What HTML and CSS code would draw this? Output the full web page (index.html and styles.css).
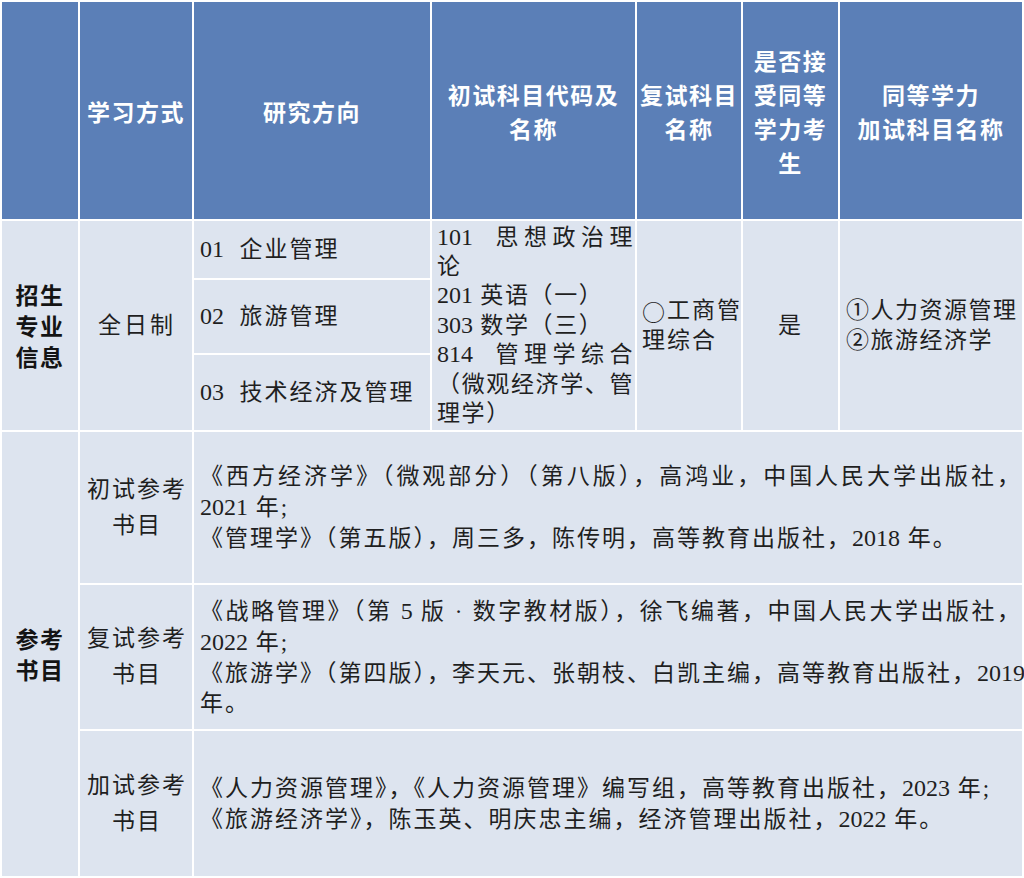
FILE: index.html
```html
<!DOCTYPE html>
<html lang="zh-CN">
<head>
<meta charset="utf-8">
<title>招生专业信息</title>
<link rel="stylesheet" href="styles.css">
</head>
<body>
<table class="grid">
  <colgroup>
    <col class="c1"><col class="c2"><col class="c3"><col class="c4"><col class="c5"><col class="c6"><col class="c7">
  </colgroup>
  <tr class="r-head">
    <th></th>
    <th>学习方式</th>
    <th>研究方向</th>
    <th>初试科目代码及<br>名称</th>
    <th>复试科目<br>名称</th>
    <th>是否接<br>受同等<br>学力考<br>生</th>
    <th>同等学力<br>加试科目名称</th>
  </tr>
  <tr class="r-a">
    <td rowspan="3" class="cat">招生<br>专业<br>信息</td>
    <td rowspan="3" class="mode">全日制</td>
    <td class="dir"><span class="num">01</span>&nbsp;&nbsp;企业管理</td>
    <td rowspan="3" class="subj">
      <span class="ln jl"><span class="num">101</span>&nbsp;&nbsp;思想政治理</span>
      <span class="ln">论</span>
      <span class="ln"><span class="num">201</span>&nbsp;英语（一）</span>
      <span class="ln"><span class="num">303</span>&nbsp;数学（三）</span>
      <span class="ln jl"><span class="num">814</span>&nbsp;&nbsp;管理学综合</span>
      <span class="ln jl">（微观经济学、管</span>
      <span class="ln">理学）</span>
    </td>
    <td rowspan="3" class="retest">
      <span class="ln jl"><span class="circ">○</span>工商管</span>
      <span class="ln">理综合</span>
    </td>
    <td rowspan="3" class="accept">是</td>
    <td rowspan="3" class="extra">
      <span class="ln">①人力资源管理</span>
      <span class="ln">②旅游经济学</span>
    </td>
  </tr>
  <tr class="r-b">
    <td class="dir"><span class="num">02</span>&nbsp;&nbsp;旅游管理</td>
  </tr>
  <tr class="r-c">
    <td class="dir"><span class="num">03</span>&nbsp;&nbsp;技术经济及管理</td>
  </tr>
  <tr class="r-d">
    <td rowspan="3" class="cat">参考<br>书目</td>
    <td class="kind">初试参考<br>书目</td>
    <td colspan="5" class="books">
      <span class="ln jl">《西方经济学》（微观部分）（第八版），高鸿业，中国人民大学出版社，</span>
      <span class="ln"><span class="num">2021</span> 年;</span>
      <span class="ln">《管理学》（第五版），周三多，陈传明，高等教育出版社，<span class="num">2018</span> 年。</span>
    </td>
  </tr>
  <tr class="r-e">
    <td class="kind">复试参考<br>书目</td>
    <td colspan="5" class="books">
      <span class="ln jl">《战略管理》（第 <span class="num">5</span> 版 · 数字教材版），徐飞编著，中国人民大学出版社，</span>
      <span class="ln"><span class="num">2022</span> 年;</span>
      <span class="ln jl">《旅游学》（第四版），李天元、张朝枝、白凯主编，高等教育出版社，<span class="num">2019</span></span>
      <span class="ln">年。</span>
    </td>
  </tr>
  <tr class="r-f">
    <td class="kind">加试参考<br>书目</td>
    <td colspan="5" class="books">
      <span class="ln">《人力资源管理》，《人力资源管理》编写组，高等教育出版社，<span class="num">2023</span> 年;</span>
      <span class="ln">《旅游经济学》，陈玉英、明庆忠主编，经济管理出版社，<span class="num">2022</span> 年。</span>
    </td>
  </tr>
</table>
</body>
</html>
```
FILE: styles.css
```css
html, body {
  margin: 0;
  padding: 0;
  background: #ffffff;
  overflow: hidden;
}

.grid {
  border-collapse: separate;
  border-spacing: 2px;
  background: #ffffff;
  width: 1024px;
  table-layout: fixed;
}

.c1 { width: 76px; }
.c2 { width: 112px; }
.c3 { width: 236px; }
.c4 { width: 203px; }
.c5 { width: 104px; }
.c6 { width: 95px; }
.c7 { width: 182px; }

.r-head { height: 217px; }
.r-a { height: 57px; }
.r-b { height: 73px; }
.r-c { height: 75px; }
.r-d { height: 151px; }
.r-e { height: 144px; }
.r-f { height: 145px; }

th {
  padding: 0;
  background: #5b7fb7;
  color: #ffffff;
  font-family: "Noto Sans CJK SC", sans-serif;
  font-weight: 700;
  font-size: 23px;
  line-height: 34px;
  letter-spacing: 1.5px;
  text-align: center;
  vertical-align: middle;
}

td {
  padding: 0;
  background: #dde4ef;
  color: #1f1f1f;
  font-family: "Liberation Serif", "Noto Sans CJK SC", serif;
  font-size: 23px;
  line-height: 30px;
  letter-spacing: 2px;
  text-align: left;
  vertical-align: middle;
}

.num {
  font-family: "Liberation Serif", serif;
  font-size: 24px;
  letter-spacing: 0;
}

.ln {
  display: block;
  white-space: nowrap;
}

.jl {
  text-align: justify;
  text-align-last: justify;
}

.cat {
  font-family: "Noto Sans CJK SC", sans-serif;
  font-weight: 700;
  color: #141414;
  line-height: 31px;
  letter-spacing: 1.5px;
  text-align: center;
}

.mode {
  text-align: center;
  padding-left: 2px;
  letter-spacing: 3px;
}

.dir {
  padding-left: 6px;
}

.subj {
  padding-left: 5px;
  padding-right: 1px;
  line-height: 29.4px;
  letter-spacing: 1.6px;
}

.retest {
  padding-left: 5px;
  padding-right: 0;
}

.circ {
  display: inline-block;
  height: 30px;
  line-height: 30px;
  vertical-align: top;
  font-family: "Noto Sans CJK SC", sans-serif;
}

.accept {
  text-align: center;
}

.extra {
  padding-left: 6px;
  letter-spacing: 1.5px;
}

.kind {
  text-align: center;
  line-height: 36px;
  padding-left: 2px;
}

.books {
  padding-left: 6px;
  padding-right: 0;
}
```
